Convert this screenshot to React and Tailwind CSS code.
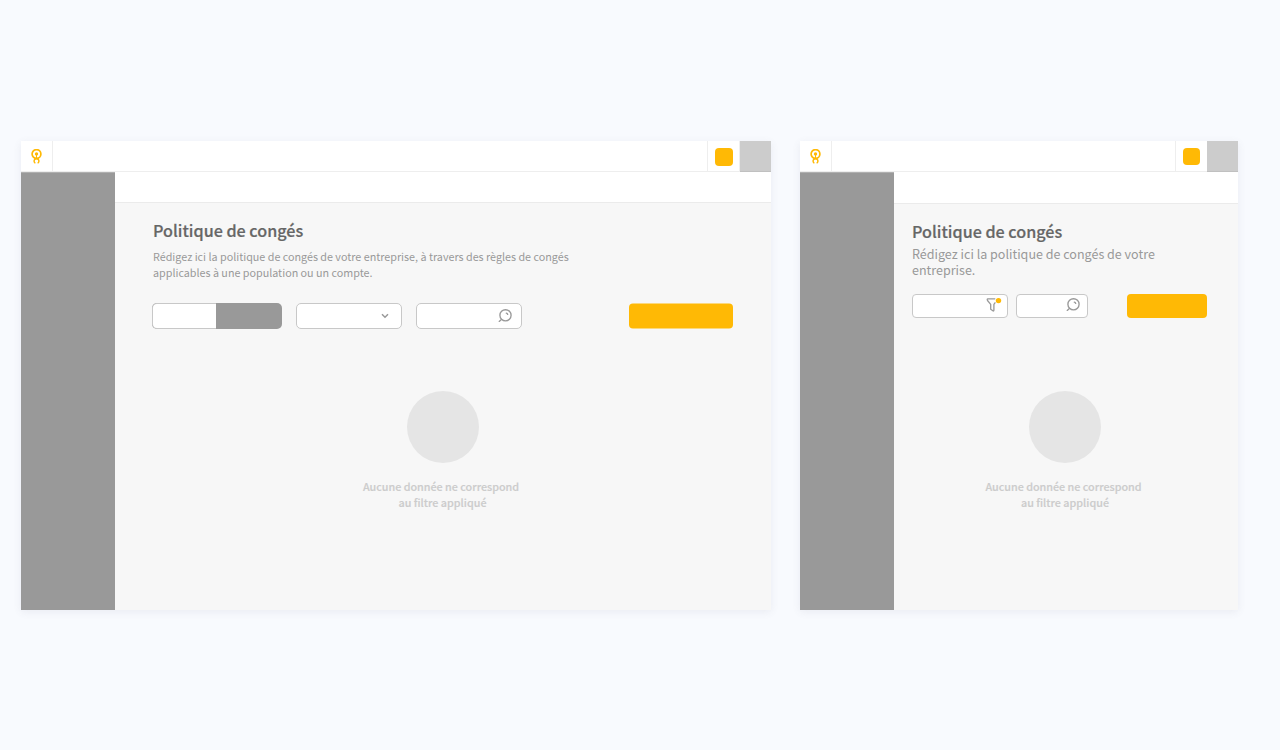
function Logo() {
  return (
    <svg width="12" height="16" viewBox="0 0 12 16" fill="none" stroke="#ffb905">
      <circle cx="5.5" cy="5" r="4.4" strokeWidth="1.7" />
      <circle cx="5.5" cy="4.9" r="1.7" fill="#ffb905" stroke="none" />
      <path d="M5.5 5v4.4" strokeWidth="1" />
      <path d="M4.4 14.2A2.4 2.4 0 1 1 6.6 14.2" strokeWidth="1.5" />
    </svg>
  );
}

function SearchIcon() {
  return (
    <svg width="16" height="16" viewBox="0 0 16 16" fill="none" stroke="#999" strokeWidth="1.35" strokeLinecap="round">
      <circle cx="8.5" cy="7.3" r="5.6" />
      <path d="M4.4 11.5L2.2 13.4" />
      <path d="M9.3 5.1A2.1 2.1 0 0 1 10.7 6.4" />
    </svg>
  );
}

function FilterIcon() {
  return (
    <svg className="overflow-visible" width="16" height="16" viewBox="0 0 16 16" fill="none">
      <path d="M7.8 1.8H0.8C0.1 1.8 0.1 2.9 0.5 3.5L3.7 7.3V12.2L6.2 14C6.6 14 6.9 13.7 6.9 13.2V7.3L8 5.8" stroke="#999" strokeWidth="1.3" strokeLinejoin="round" strokeLinecap="round" />
      <circle cx="11.5" cy="3.6" r="2.7" fill="#ffb905" />
    </svg>
  );
}

function Header({ wide }) {
  return (
    <header className="flex h-[31px] w-full shrink-0 bg-white shadow-[inset_0_-1px_0_#eeeeee]">
      <div className="flex w-8 shrink-0 justify-center border-r border-[#eeeeee] pt-2">
        <Logo />
      </div>
      <div className="grow" />
      <div
        className={
          wide
            ? "flex w-[33px] shrink-0 items-start border-r border-l border-r-[#eeeeee] border-l-[#eeeeee] pt-[7px] pl-[7px]"
            : "flex w-8 shrink-0 items-start border-l border-[#eeeeee] pt-[7px] pl-[7px]"
        }
      >
        <div className={wide ? "h-[18px] w-[18px] shrink-0 rounded-[4px] bg-[#ffb905]" : "h-[17px] w-[17px] shrink-0 rounded-[4px] bg-[#ffb905]"} />
      </div>
      <div className="w-[31px] shrink-0 border-b border-[#c0c0c0] bg-[#cccccc]" />
    </header>
  );
}

function Title({ className }) {
  return (
    <h1 className={"text-[16.15px] leading-6 font-medium text-[#666666] [-webkit-text-stroke:0.2px_#666666] " + className}>
      Politique de congés
    </h1>
  );
}

function EmptyState({ className }) {
  return (
    <div className={"flex flex-col items-center " + className}>
      <div className="h-[72px] w-[72px] rounded-full bg-[#e5e5e5]" />
      <p className="mt-4 flex flex-col items-center text-[10.77px] leading-4 font-medium whitespace-nowrap text-[#cccccc] [-webkit-text-stroke:0.15px_#cccccc]">
        <span className="pr-[3px]">Aucune donnée ne correspond</span>
        <span>au filtre appliqué</span>
      </p>
    </div>
  );
}

function Panel({ className, wide, children }) {
  return (
    <section className={"flex h-[469px] shrink-0 flex-col bg-[#f7f7f7] shadow-[0_2px_8px_rgba(90,90,120,0.09)] " + className}>
      <Header wide={wide} />
      <div className="flex grow">
        <aside className="w-[94px] shrink-0 border-t border-[#b0b0b0] bg-[#999999]" />
        {children}
      </div>
    </section>
  );
}

export default function App() {
  return (
    <main className="flex h-[750px] w-[1280px] gap-[29px] overflow-hidden bg-[#f8fafe] pt-[141px] pl-[21px] font-['Noto_Sans_CJK_SC',sans-serif]">
      <Panel className="w-[750px]" wide>
        <div className="flex w-0 grow flex-col">
          <div className="h-[31px] border-b border-[#ebebeb] bg-white" />
          <div className="flex flex-col pr-[38px] pl-[37px]">
            <Title className="mt-[15px] ml-px" />
            <p className="mt-[7px] ml-px text-[10.75px] leading-4 whitespace-nowrap text-[#999999]">
              Rédigez ici la politique de congés de votre entreprise, à travers des règles de congés
              <br />
              applicables à une population ou un compte.
            </p>
            <div className="mt-[22px] flex h-[26px] items-center">
              <div className="flex h-[26px] w-[130px] overflow-hidden rounded-[5px] bg-[#999999]">
                <div className="w-16 rounded-l-[5px] border border-r-0 border-[#c8c8c8] bg-white" />
              </div>
              <div className="ml-3.5 flex h-[26px] w-[106px] items-center justify-end rounded-[5px] border border-[#c8c8c8] bg-white pr-3">
                <svg width="8" height="6" viewBox="0 0 8 6" fill="none" stroke="#999" strokeWidth="1.5">
                  <path d="M1 1.3L4 4.3L7 1.3" />
                </svg>
              </div>
              <div className="ml-3.5 flex h-[26px] w-[106px] items-center justify-end rounded-[5px] border border-[#c8c8c8] bg-white pr-2">
                <SearchIcon />
              </div>
              <svg className="ml-auto" width="104" height="26" viewBox="0 0 104 26">
                <rect y="0.5" width="104" height="25" rx="4" fill="#ffb905" />
              </svg>
            </div>
            <EmptyState className="mt-[62px]" />
          </div>
        </div>
      </Panel>
      <Panel className="w-[438px]">
        <div className="flex w-0 grow flex-col">
          <div className="h-8 border-b border-[#ebebeb] bg-white" />
          <div className="flex flex-col pr-[31px] pl-[18px]">
            <Title className="mt-[15px]" />
            <p className="mt-[3px] text-[12.54px] leading-4 whitespace-nowrap text-[#999999]">
              Rédigez ici la politique de congés de votre
              <br />
              entreprise.
            </p>
            <div className="mt-4 flex h-6 items-center">
              <div className="flex h-6 w-24 items-start justify-end rounded-[4px] border border-[#c8c8c8] bg-white pt-[2px] pr-1">
                <FilterIcon />
              </div>
              <div className="ml-2 flex h-6 w-[72px] items-start justify-end rounded-[4px] border border-[#c8c8c8] bg-white pt-[2px] pr-1.5">
                <SearchIcon />
              </div>
              <div className="ml-auto h-6 w-20 rounded-[4px] bg-[#ffb905]" />
            </div>
            <EmptyState className="mt-[73px] w-[306px]" />
          </div>
        </div>
      </Panel>
    </main>
  );
}
